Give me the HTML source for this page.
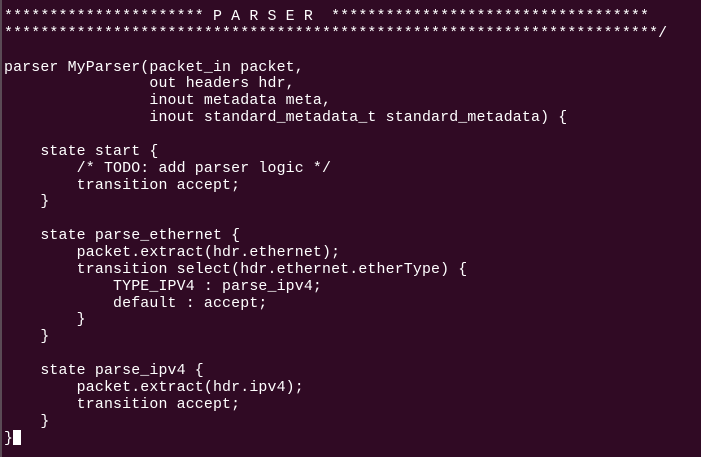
<!DOCTYPE html>
<html><head><style>
html,body{margin:0;padding:0;background:#300a24;width:701px;height:457px;overflow:hidden}
body{position:relative}
pre{margin:0;position:absolute;left:4px;top:9px;font-family:"Liberation Mono",monospace;font-size:14.9px;letter-spacing:0.15px;line-height:16.86px;color:#fff;}
.bar{position:absolute;left:0;top:0;width:2px;height:457px;background:#5a4a55}
.cur{display:inline-block;width:8px;height:15px;background:#fff;vertical-align:-3px}
</style></head><body>
<div class="bar"></div>
<pre>********************** P A R S E R  ***********************************
************************************************************************/

parser MyParser(packet_in packet,
                out headers hdr,
                inout metadata meta,
                inout standard_metadata_t standard_metadata) {

    state start {
        /* TODO: add parser logic */
        transition accept;
    }

    state parse_ethernet {
        packet.extract(hdr.ethernet);
        transition select(hdr.ethernet.etherType) {
            TYPE_IPV4 : parse_ipv4;
            default : accept;
        }
    }

    state parse_ipv4 {
        packet.extract(hdr.ipv4);
        transition accept;
    }
}<span class="cur"></span></pre>
</body></html>
